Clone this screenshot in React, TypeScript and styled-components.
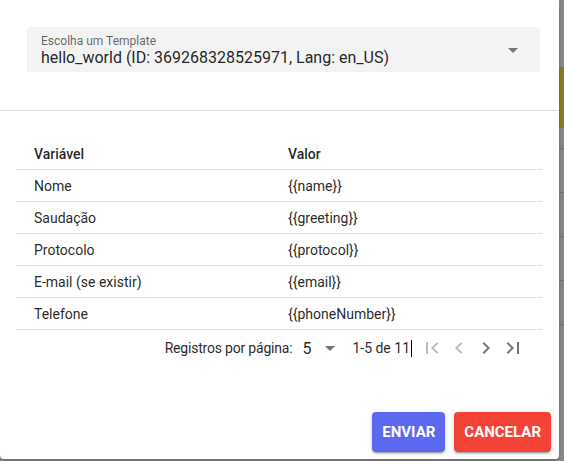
import React from "react";
import styled, { createGlobalStyle } from "styled-components";

const Global = createGlobalStyle`
  html, body { margin: 0; padding: 0; }
  body {
    background: #8a8a8a;
    font-family: Roboto, "Liberation Sans", Arial, sans-serif;
    overflow: hidden;
  }
`;

const Page = styled.div`
  display: flex;
  width: 564px;
  height: 461px;
`;

const Dialog = styled.div`
  width: 559px;
  height: 459px;
  background: #fff;
  border-radius: 0 0 4px 4px;
  box-shadow: 0 2px 6px rgba(0, 0, 0, 0.25);
  display: flex;
  flex-direction: column;
  flex-shrink: 0;
  position: relative;
  z-index: 1;
`;

const Strip = styled.div`
  flex: 1;
  display: flex;
  flex-direction: column;
`;

const StripSeg = styled.div<{ $h: number; $c: string }>`
  height: ${(p) => p.$h}px;
  background: ${(p) => p.$c};
  flex-shrink: 0;
`;

const TopSection = styled.div`
  height: 111px;
  box-sizing: border-box;
  padding: 27px 19px 0 27px;
  border-bottom: 1px solid #e0e0e0;
`;

const SelectBox = styled.div`
  height: 45px;
  background: #f3f3f3;
  border-radius: 4px 4px 0 0;
  display: flex;
  align-items: center;
  padding: 0 15px 0 14px;
  box-sizing: border-box;
`;

const SelectTexts = styled.div`
  flex: 1;
  display: flex;
  flex-direction: column;
`;

const SelectLabel = styled.div`
  font-size: 12px;
  line-height: 14px;
  color: rgba(0, 0, 0, 0.6);
  margin-top: 2px;
`;

const SelectValue = styled.div`
  font-size: 16px;
  line-height: 19px;
  color: rgba(0, 0, 0, 0.87);
`;

const TableSection = styled.div`
  padding: 27px 17px 0 16px;
`;

const Table = styled.div`
  display: flex;
  flex-direction: column;
`;

const Row = styled.div<{ $head?: boolean }>`
  display: grid;
  grid-template-columns: 254px 1fr;
  height: 32px;
  box-sizing: border-box;
  border-bottom: 1px solid #e0e0e0;
  align-items: center;
  padding-left: 18px;
  font-size: 14px;
  font-weight: ${(p) => (p.$head ? 500 : 400)};
  color: rgba(0, 0, 0, 0.87);
`;

const Pagination = styled.div`
  height: 36px;
  display: flex;
  align-items: center;
  justify-content: flex-end;
  padding-right: 17px;
  font-size: 14px;
  color: rgba(0, 0, 0, 0.87);
`;

const PageLabel = styled.span`
  margin-right: 10px;
  letter-spacing: -0.2px;
`;

const PerPage = styled.div`
  display: flex;
  align-items: center;
  font-size: 16px;
  margin-right: 10px;
  gap: 7px;
`;

const Range = styled.span`
  display: flex;
  align-items: center;
  margin-right: 8px;
`;

const Caret = styled.span`
  display: inline-block;
  width: 1px;
  height: 17px;
  background: #000;
  margin-left: 1px;
`;

const IconBtn = styled.span<{ $disabled?: boolean }>`
  width: 24px;
  height: 24px;
  display: flex;
  color: ${(p) => (p.$disabled ? "#bdbdbd" : "#757575")};
`;

const Icons = styled.div`
  display: flex;
  gap: 3px;
`;

const Actions = styled.div`
  margin-top: auto;
  display: flex;
  justify-content: flex-end;
  gap: 9px;
  padding: 0 8px 7px 0;
`;

const Button = styled.button<{ $bg: string }>`
  height: 40px;
  padding: 0 10px;
  border: none;
  border-radius: 4px;
  background: ${(p) => p.$bg};
  color: #fff;
  font-family: Roboto, "Liberation Sans", Arial, sans-serif;
  font-size: 15px;
  font-weight: 700;
  letter-spacing: 0;
  text-transform: uppercase;
  box-shadow: 0 3px 1px -2px rgba(0, 0, 0, 0.2), 0 2px 2px 0 rgba(0, 0, 0, 0.14),
    0 1px 5px 0 rgba(0, 0, 0, 0.12);
`;

const Icon = ({ d, size = 24, color }: { d: string; size?: number; color?: string }) => (
  <svg width={size} height={size} viewBox="0 0 24 24" fill={color || "currentColor"}>
    <path d={d} />
  </svg>
);

const ARROW = "M7 10l5 5 5-5z";
const FIRST = "M18.41 16.59L13.82 12l4.59-4.59L17 6l-6 6 6 6zM6 6h2v12H6z";
const PREV = "M15.41 16.59L10.83 12l4.58-4.59L14 6l-6 6 6 6 1.41-1.41z";
const NEXT = "M8.59 16.59L13.17 12 8.59 7.41 10 6l6 6-6 6-1.41-1.41z";
const LAST = "M5.59 7.41L10.18 12l-4.59 4.59L7 18l6-6-6-6zM16 6h2v12h-2z";

const rows = [
  ["Nome", "{{name}}"],
  ["Saudação", "{{greeting}}"],
  ["Protocolo", "{{protocol}}"],
  ["E-mail (se existir)", "{{email}}"],
  ["Telefone", "{{phoneNumber}}"],
];

const strip: [number, string][] = [
  [67, "#8c8c8c"],
  [61, "#8b8226"],
  [20, "#8c8c8c"],
  [1, "#777"],
  [43, "#8c8c8c"],
  [1, "#777"],
  [43, "#8c8c8c"],
  [1, "#777"],
  [43, "#8c8c8c"],
  [1, "#777"],
  [43, "#8c8c8c"],
  [1, "#777"],
  [137, "#8c8c8c"],
];

export default function App() {
  return (
    <>
      <Global />
      <Page>
        <Dialog>
          <TopSection>
            <SelectBox>
              <SelectTexts>
                <SelectLabel>Escolha um Template</SelectLabel>
                <SelectValue>hello_world (ID: 369268328525971, Lang: en_US)</SelectValue>
              </SelectTexts>
              <Icon d={ARROW} color="#757575" />
            </SelectBox>
          </TopSection>
          <TableSection>
            <Table>
              <Row $head>
                <span>Variável</span>
                <span>Valor</span>
              </Row>
              {rows.map(([a, b]) => (
                <Row key={a}>
                  <span>{a}</span>
                  <span>{b}</span>
                </Row>
              ))}
            </Table>
            <Pagination>
              <PageLabel>Registros por página:</PageLabel>
              <PerPage>
                <span>5</span>
                <Icon d={ARROW} color="#757575" />
              </PerPage>
              <Range>
                1-5 de 11
                <Caret />
              </Range>
              <Icons>
                <IconBtn $disabled>
                  <Icon d={FIRST} />
                </IconBtn>
                <IconBtn $disabled>
                  <Icon d={PREV} />
                </IconBtn>
                <IconBtn>
                  <Icon d={NEXT} />
                </IconBtn>
                <IconBtn>
                  <Icon d={LAST} />
                </IconBtn>
              </Icons>
            </Pagination>
          </TableSection>
          <Actions>
            <Button $bg="#5c67f2">Enviar</Button>
            <Button $bg="#f44336">Cancelar</Button>
          </Actions>
        </Dialog>
        <Strip>
          {strip.map(([h, c], i) => (
            <StripSeg key={i} $h={h} $c={c} />
          ))}
        </Strip>
      </Page>
    </>
  );
}
